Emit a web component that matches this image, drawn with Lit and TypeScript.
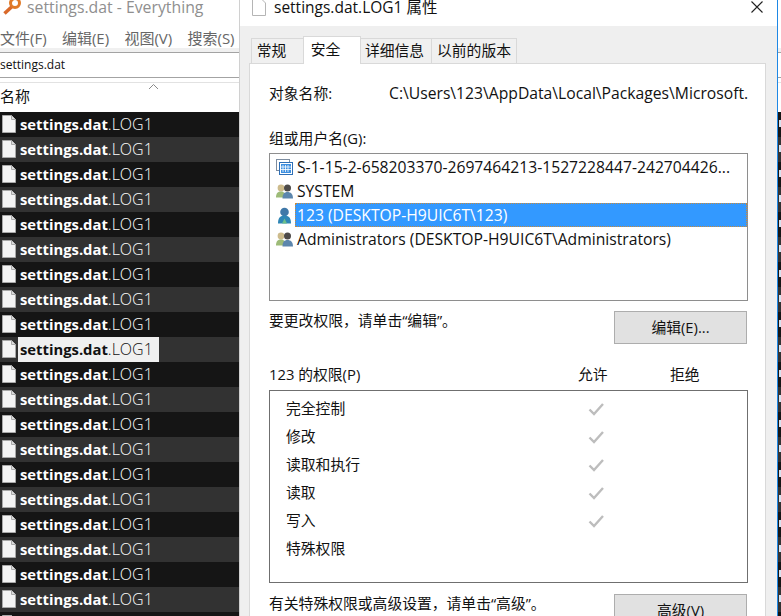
import { LitElement, html, css, svg } from "lit";
import { customElement } from "lit/decorators.js";

const fileIcon = html`<svg class="ficon" width="16" height="18" viewBox="0 0 16 18"><path d="M1.500.5H10.500L14.500 4.500V17.500H1.500Z" fill="#f4f4f4" stroke="#a9a9a9"/><path d="M10.500.5V4.500H14.500" fill="#dcdcdc" stroke="#a9a9a9"/></svg>`;

const users = svg`<circle cx="5" cy="5" r="3.400" fill="#cdbb8c"/><path d="M0 14.500c0-4.500 2-6 5-6s4 1.500 4 6Z" fill="#9dbb78"/><circle cx="11.500" cy="5" r="3.500" fill="#4d4a48"/><path d="M6.500 15.500c0-4.500 1.800-6.500 5-6.500s5.500 2 5.500 6.500Z" fill="#5c86ad"/>`;
const usersIcon = html`<svg class="uicon" width="17" height="16" viewBox="0 0 17 16">${users}</svg>`;
const userIcon = html`<svg class="uicon" width="17" height="17" viewBox="0 0 17 17"><circle cx="8.500" cy="5" r="4.300" fill="#3f78a8"/><path d="M2 16.500c0-6 2.500-8 6.500-8s6.500 2 6.500 8Z" fill="#2f86b5"/><path d="M6 16.500l2.500-5 2.500 5Z" fill="#6cc08a"/></svg>`;
const appIcon = html`<svg class="uicon" width="17" height="16" viewBox="0 0 17 16"><rect x=".5" y=".5" width="13" height="11" fill="#fff" stroke="#7d8da0"/><rect x="3.500" y="3.500" width="13" height="12" fill="#fff" stroke="#2f6fb5"/><rect x="5" y="5" width="10" height="9" fill="#3d8fe0"/><path d="M7 6v7M9.500 6v7M12 6v7M5 8h10M5 10.500h10" stroke="#fff" stroke-width=".8"/></svg>`;
const check = html`<svg width="16" height="14" viewBox="0 0 16 14"><path d="M1.500 7.500L6 12L15 2" fill="none" stroke="#bdbdbd" stroke-width="2.400"/></svg>`;

@customElement("app-root")
export class AppRoot extends LitElement {
  static styles = css`
    :host {
      display: block;
      width: 781px;
      height: 616px;
      overflow: hidden;
      font-family: "Open Sans", "Noto Sans CJK SC", sans-serif;
      font-size: 14.800px;
      color: #111;
    }
    * { box-sizing: border-box; }
    .page { display: flex; width: 781px; height: 616px; background: #fff; overflow: hidden; }
    .left { width: 239px; flex: none; display: flex; flex-direction: column; overflow: hidden; background: #fff; }
    .left-title { height: 26px; flex: none; display: flex; align-items: flex-start; gap: 5px; padding-left: 2px; color: #8f8f8f; font-size: 15.800px; line-height: 14px; white-space: nowrap; }
    .left-menu { height: 22px; flex: none; display: flex; gap: 15.300px; color: #666; white-space: nowrap; font-size: 15px; line-height: 24px; }
    .band { height: 4px; flex: none; background: #f0f0f0; }
    .search { height: 26px; flex: none; border-top: 1px solid #a3a3a3; border-bottom: 1px solid #a3a3a3; font-size: 12px; line-height: 24px; }
    .col { height: 30px; flex: none; position: relative; border-top: 1px solid #e2e2e2; margin-top: 4px; font-size: 15px; padding-top: 1px; line-height: 24px; }
    .caret { position: absolute; left: 148px; top: 0; }
    .row { height: 25px; flex: none; display: flex; align-items: center; background: #151515; color: #fff; font-size: 14.800px; white-space: nowrap; padding: 0 0 2px 1px; }
    .row:nth-child(even) { background: #323232; }
    .row.sel { background: linear-gradient(#f0f0f0, #f0f0f0) 18px 0 / 141px 100% no-repeat, #323232; color: #111; }
    .ficon { flex: none; margin-right: 3px; }
    .row b { font-weight: 700; }
    .row span { font-weight: 300; font-size: 16px; }
    .rows { display: flex; flex-direction: column; }
    .dialog { width: 539px; flex: none; display: flex; flex-direction: column; background: #efefef; border-left: 1px solid #d0d0d0; border-right: 1px solid #1e88e5; }
    .dtitle { height: 26px; flex: none; background: #fff; display: flex; align-items: flex-start; gap: 8px; padding-left: 12px; position: relative; font-size: 15.500px; line-height: 14px; }
    .close { position: absolute; right: 14px; top: 1px; }
    .tabs { display: flex; height: 38px; flex: none; padding-left: 12px; align-items: flex-end; position: relative; z-index: 1; }
    .tab { height: 26px; border: 1px solid #d9d9d9; background: #f0f0f0; margin-left: -1px; text-align: center; line-height: 23px; flex: none; }
    .tab.on { height: 28px; background: #fff; border-bottom: none; line-height: 24px; }
    .t1 { width: 53px; padding-right: 12px; }
    .t2 { width: 58px; padding-right: 13px; }
    .t3 { width: 72px; padding-right: 3px; }
    .t4 { width: 86px; }
    .panel { flex: none; width: 517px; height: 560px; margin-left: 9px; background: #fff; border: 1px solid #d9d9d9; padding: 0 17px 0 19px; margin-top: -1px; }
    .obj { display: flex; height: 20px; margin-top: 19px; white-space: nowrap; overflow: hidden; line-height: 20px; }
    .obj .k { width: 120px; flex: none; }
    .obj .v { font-size: 15.700px; }
    .lbl { margin-top: 25px; height: 20px; line-height: 20px; }
    .list { margin-top: 5px; height: 148px; border: 1px solid #8e8e8e; padding-top: 1px; }
    .li { height: 24px; display: flex; align-items: center; padding-left: 6px; white-space: nowrap; overflow: hidden; font-size: 15.700px; }
    .uicon { flex: none; }
    .li .t { flex: 1; height: 24px; line-height: 24px; padding-left: 2px; margin-left: 2px; overflow: hidden; }
    .li.on .t { background: #3399ff; color: #fff; outline: 1px dotted #c98a3a; outline-offset: -1px; }
    .hint { display: flex; justify-content: space-between; align-items: flex-start; margin-top: 10px; }
    .hint span { line-height: 18px; }
    .btn { width: 133px; height: 33px; background: #e1e1e1; border: 1px solid #adadad; text-align: center; line-height: 31px; flex: none; margin-right: 1px; }
    .phead { display: flex; margin-top: 20px; height: 20px; line-height: 20px; }
    .phead .n { width: 309px; }
    .phead .a { width: 92px; }
    .perm { margin-top: 6px; height: 193px; border: 1px solid #6f6f6f; padding-top: 4px; }
    .p { height: 28px; display: flex; align-items: center; padding-left: 16px; }
    .p .nm { width: 302px; padding-bottom: 4px; }
    .hint2 { margin-top: 11px; }
    .gutter { flex: 1; min-width: 0; display: flex; flex-direction: column; overflow: hidden; background: #fff; }
    .g-top { height: 48px; flex: none; }
    .g-band { height: 4px; flex: none; background: #f0f0f0; }
    .g-s1 { height: 24px; flex: none; }
    .g-s2 { height: 4px; flex: none; }
    .g-s3 { height: 29px; flex: none; }
    .g-rows { display: flex; flex-direction: column; }
    .g-row { height: 25px; flex: none; background: #151515; padding: 8px 0 0 1px; }
    .g-row:nth-child(even) { background: #323232; }
    .g-row i { display: block; width: 2px; height: 7px; background: #d8e2ee; }
    .g-line { height: 1px; flex: none; background: #a3a3a3; }
    .g-light { background: #e2e2e2; }
  `;

  render() {
    const rows = Array.from({ length: 21 }, (_, i) => i);
    const perms = ["完全控制", "修改", "读取和执行", "读取", "写入", "特殊权限"];
    return html`<div class="page">
      <div class="left">
        <div class="left-title">
          <svg width="20" height="16" viewBox="0 0 20 16"><circle cx="13" cy="3" r="4.500" fill="none" stroke="#e07a28" stroke-width="3"/><path d="M9.500 7L2.500 13.500" stroke="#d9692a" stroke-width="3.500"/></svg>
          <span>settings.dat - Everything</span>
        </div>
        <div class="left-menu"><span>文件(F)</span><span>编辑(E)</span><span>视图(V)</span><span>搜索(S)</span></div>
        <div class="band"></div>
        <div class="search">settings.dat</div>
        <div class="col">名称<svg class="caret" width="11" height="7" viewBox="0 0 11 7"><path d="M1 6L5.500 1.500L10 6" fill="none" stroke="#8a8a8a"/></svg></div>
        <div class="rows">
          ${rows.map((i) => html`<div class="row ${i === 9 ? "sel" : ""}">${fileIcon}<b>settings.dat</b><span>.LOG1</span></div>`)}
        </div>
      </div>
      <div class="dialog">
        <div class="dtitle">
          <svg width="14" height="16" viewBox="0 2 14 16"><path d="M.5.5H9L13.500 5V17.500H.5Z" fill="#fff" stroke="#b5b5b5"/></svg>
          <span>settings.dat.LOG1 属性</span>
          <svg class="close" width="12" height="12" viewBox="0 0 12 12"><path d="M.5.5L11.500 11.500M11.500.5L.5 11.500" stroke="#222" stroke-width="1.100"/></svg>
        </div>
        <div class="tabs">
          <div class="tab t1">常规</div>
          <div class="tab on t2">安全</div>
          <div class="tab t3">详细信息</div>
          <div class="tab t4">以前的版本</div>
        </div>
        <div class="panel">
          <div class="obj"><span class="k">对象名称:</span><span class="v">C:\\Users\\123\\AppData\\Local\\Packages\\Microsoft.</span></div>
          <div class="lbl">组或用户名(G):</div>
          <div class="list">
            <div class="li">${appIcon}<span class="t">S-1-15-2-658203370-2697464213-1527228447-242704426...</span></div>
            <div class="li">${usersIcon}<span class="t">SYSTEM</span></div>
            <div class="li on">${userIcon}<span class="t">123 (DESKTOP-H9UIC6T\\123)</span></div>
            <div class="li">${usersIcon}<span class="t">Administrators (DESKTOP-H9UIC6T\\Administrators)</span></div>
          </div>
          <div class="hint"><span>要更改权限，请单击“编辑”。</span><div class="btn">编辑(E)...</div></div>
          <div class="phead"><span class="n">123 的权限(P)</span><span class="a">允许</span><span>拒绝</span></div>
          <div class="perm">
            ${perms.map((p, i) => html`<div class="p"><span class="nm">${p}</span>${i < 5 ? check : ""}</div>`)}
          </div>
          <div class="hint hint2"><span>有关特殊权限或高级设置，请单击“高级”。</span><div class="btn">高级(V)</div></div>
        </div>
      </div>
      <div class="gutter">
        <div class="g-top"></div>
        <div class="g-band"></div>
        <div class="g-line"></div>
        <div class="g-s1"></div>
        <div class="g-line"></div>
        <div class="g-s2"></div>
        <div class="g-line g-light"></div>
        <div class="g-s3"></div>
        <div class="g-rows">${rows.map(() => html`<div class="g-row"><i></i></div>`)}</div>
      </div>
    </div>`;
  }
}
